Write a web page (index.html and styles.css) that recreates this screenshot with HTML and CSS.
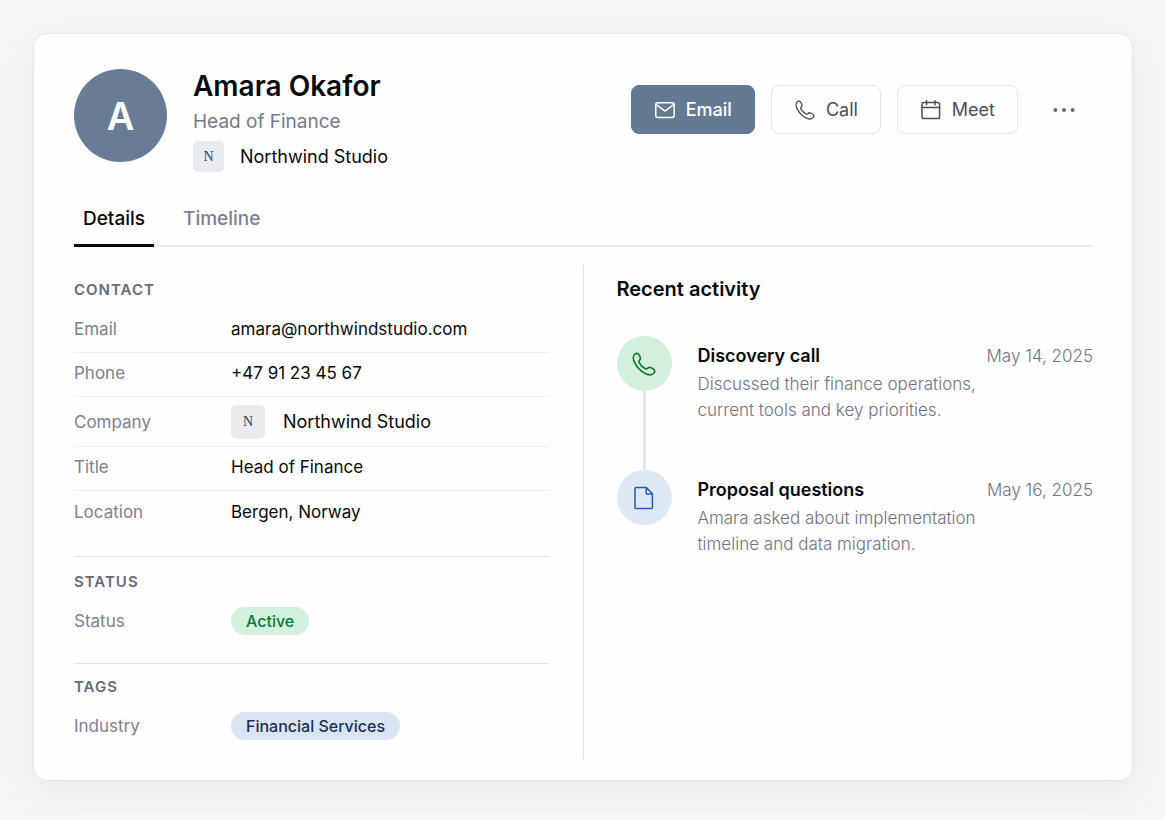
FILE: index.html
```html
<!DOCTYPE html>
<html lang="en">

<head>
  <meta charset="UTF-8">
  <meta name="viewport" content="width=device-width, initial-scale=1.0">
  <title>Amara Okafor</title>
  <link rel="stylesheet" href="styles.css">
</head>

<body>
  <main class="card">
    <!-- Person header -->
    <header class="header">
      <div class="avatar">A</div>
      <div class="person">
        <h1>Amara Okafor</h1>
        <p class="role">Head of Finance</p>
        <div class="company">
          <span class="logo">N</span>
          <span>Northwind Studio</span>
        </div>
      </div>
      <div class="actions">
        <button type="button" class="btn btn-primary">
          <svg class="icon" viewBox="0 0 20 20">
            <rect x=".8" y="2.8" width="18.4" height="14.6" rx="1.8" />
            <path d="M1.2 4.5 10 11.1l8.800-6.600" />
          </svg>
          Email
        </button>
        <button type="button" class="btn">
          <svg class="icon" viewBox="0 0 22 22">
            <path d="M3.200 1.600C4.600.9 6 1.500 6.600 2.800l.9 2c.4 1 .2 1.900-.5 2.600-.7.7-.8 1.500-.4 2.400C7.700 12 9.700 14 11.900 15.200c.9.500 1.700.4 2.400-.3.8-.9 1.800-1.100 2.800-.6l2.200 1.100c1.400.7 1.900 2.200 1.100 3.500C18.900 21 15.600 21.300 12.600 19.900 8 17.700 4 13.500 2 8.800.8 6 1 2.700 3.200 1.600z" />
          </svg>
          Call
        </button>
        <button type="button" class="btn">
          <svg class="icon" viewBox="0 0 20 20">
            <rect x="1" y="2.6" width="17.6" height="16" rx="1.8" />
            <path d="M1 7.400h17.600M5.600.8v4M14 .8v4" />
          </svg>
          Meet
        </button>
        <button type="button" class="more-btn" aria-label="More">
          <svg viewBox="0 0 22 6">
            <circle cx="2.4" cy="3" r="2.1" />
            <circle cx="11" cy="3" r="2.1" />
            <circle cx="19.6" cy="3" r="2.1" />
          </svg>
        </button>
      </div>
    </header>

    <nav class="tabs">
      <button type="button" class="tab active">Details</button>
      <button type="button" class="tab">Timeline</button>
    </nav>

    <div class="columns">
      <!-- Details Column -->
      <div class="details">
        <section>
          <h2>CONTACT</h2>
          <dl>
            <div class="row">
              <dt>Email</dt>
              <dd>amara@northwindstudio.com</dd>
            </div>
            <div class="row">
              <dt>Phone</dt>
              <dd>+47 91 23 45 67</dd>
            </div>
            <div class="row row-company">
              <dt>Company</dt>
              <dd class="company"><span class="logo logo-large">N</span>Northwind Studio</dd>
            </div>
            <div class="row">
              <dt>Title</dt>
              <dd>Head of Finance</dd>
            </div>
            <div class="row">
              <dt>Location</dt>
              <dd>Bergen, Norway</dd>
            </div>
          </dl>
        </section>
        <section>
          <h2>STATUS</h2>
          <dl>
            <div class="row row-pill">
              <dt>Status</dt>
              <dd><span class="pill pill-green">Active</span></dd>
            </div>
          </dl>
        </section>
        <section class="tags">
          <h2>TAGS</h2>
          <dl>
            <div class="row row-pill">
              <dt>Industry</dt>
              <dd><span class="pill pill-blue">Financial Services</span></dd>
            </div>
          </dl>
        </section>
      </div>

      <!-- Activity Column -->
      <div class="activity">
        <h2>Recent activity</h2>
        <ul>
          <li class="event">
            <div class="marker">
              <span class="dot dot-green">
                <svg class="icon icon-large" viewBox="0 0 22 22">
                  <path d="M3.200 1.600C4.600.9 6 1.500 6.600 2.800l.9 2c.4 1 .2 1.900-.5 2.600-.7.7-.8 1.500-.4 2.400C7.700 12 9.700 14 11.900 15.200c.9.500 1.700.4 2.400-.3.8-.9 1.800-1.100 2.800-.6l2.200 1.100c1.400.7 1.900 2.200 1.100 3.500C18.900 21 15.600 21.300 12.600 19.900 8 17.700 4 13.500 2 8.800.8 6 1 2.700 3.200 1.600z" />
                </svg>
              </span>
            </div>
            <div class="event-text">
              <h3>Discovery call</h3>
              <p>Discussed their finance operations, current tools and key priorities.</p>
            </div>
            <time datetime="2025-05-14">May 14, 2025</time>
          </li>
          <li class="event">
            <div class="marker">
              <span class="dot dot-blue">
                <svg class="icon icon-large" viewBox="0 0 24 24">
                  <path d="M3.700 1.600h10.700l6 6.200v13.900a.7.7 0 0 1-.7.700h-16a.7.7 0 0 1-.7-.7V2.300a.7.7 0 0 1 .7-.7zM14.200 1.800v5.600a.6.600 0 0 0 .6.600h5.400" />
                </svg>
              </span>
            </div>
            <div class="event-text">
              <h3>Proposal questions</h3>
              <p>Amara asked about implementation timeline and data migration.</p>
            </div>
            <time datetime="2025-05-16">May 16, 2025</time>
          </li>
        </ul>
      </div>
    </div>
  </main>
</body>

</html>
```
FILE: styles.css
```css
* {
  box-sizing: border-box;
}

body {
  font-family: Inter, sans-serif;
  font-size: 17px;
  line-height: 24px;
  background-color: #f7f7f7;
  color: #08090c;
  margin: 0;
  padding: 33px 32px 33px 33px;
}

h1,
h2,
h3,
p,
ul,
dl,
dd {
  margin: 0;
  padding: 0;
}

button {
  font-family: inherit;
  cursor: pointer;
}

.card {
  background-color: #fefefe;
  border: 1px solid #e5e7e9;
  border-radius: 14px;
  box-shadow: 0 12px 40px rgba(20, 25, 30, 0.07);
  padding: 35px 39px 21px 40px;
}

/* Header */
.header {
  display: flex;
  align-items: flex-start;
}

.avatar {
  display: flex;
  align-items: center;
  justify-content: center;
  width: 93px;
  height: 93px;
  margin-right: 26px;
  border-radius: 50%;
  background-color: #687d95;
  color: #fff;
  font-size: 38px;
  font-weight: 600;
}

.person h1 {
  font-size: 28px;
  font-weight: 600;
  line-height: 34px;
}

.role {
  margin: 7px 0;
  font-size: 19px;
  color: #74788b;
}

.company {
  display: flex;
  align-items: center;
  gap: 16px;
  font-size: 18px;
}

.logo {
  display: flex;
  align-items: center;
  justify-content: center;
  width: 31px;
  height: 31px;
  border-radius: 5px;
  background-color: #e8ebf0;
  color: #34435a;
  font-family: "Liberation Serif", serif;
  font-size: 14px;
}

.logo-large {
  width: 34px;
  height: 34px;
  margin-right: 2px;
}

.actions {
  display: flex;
  gap: 16px;
  margin-top: 16px;
  margin-left: auto;
}

.btn {
  display: flex;
  align-items: center;
  gap: 11px;
  height: 49px;
  padding: 0 22px 0 23px;
  border: 1px solid #e3e6e8;
  border-radius: 8px;
  background-color: #fefefe;
  color: #4b4d5f;
  font-size: 18px;
}

.btn-primary {
  border-color: #60758e;
  background-color: #647a93;
  color: #fff;
  font-weight: 500;
}

.icon {
  width: 20px;
  height: 20px;
  fill: none;
  stroke: currentColor;
  stroke-width: 1.5;
  stroke-linecap: round;
  stroke-linejoin: round;
}

.icon-large {
  width: 24px;
  height: 24px;
}

.more-btn {
  display: flex;
  align-items: center;
  justify-content: center;
  width: 59px;
  height: 49px;
  padding: 0;
  border: none;
  background: none;
  color: #6b6e7b;
}

.more-btn svg {
  width: 22px;
  height: 6px;
  fill: currentColor;
}

/* Tabs */
.tabs {
  display: flex;
  gap: 20px;
  margin-top: 25px;
  border-bottom: 2px solid #e9ebed;
}

.tab {
  margin-bottom: -2px;
  padding: 10px 9px 13px;
  border: none;
  border-bottom: 3px solid transparent;
  background: none;
  color: #7b7e8e;
  font-size: 19px;
  font-weight: 500;
  line-height: 24px;
}

.tab.active {
  border-bottom-color: #08090c;
  color: #08090c;
}

/* Columns */
.columns {
  display: grid;
  grid-template-columns: 1fr 1fr;
  margin-top: 18px;
}

.details {
  padding-right: 34px;
  border-right: 1px solid #e2e5e8;
}

.details section {
  padding: 15px 0 23px;
  border-bottom: 1px solid #e2e6e9;
}

.details .tags {
  padding: 13px 0 14px;
  border-bottom: none;
}

.details h2 {
  margin-bottom: 9px;
  color: #676a7a;
  font-size: 15px;
  font-weight: 600;
  letter-spacing: 1px;
  line-height: 20px;
}

.row {
  display: grid;
  grid-template-columns: 157px 1fr;
  align-items: center;
  min-height: 44px;
  padding-bottom: 3px;
  border-bottom: 1px solid #edf0f2;
}

.row:last-child {
  min-height: 42px;
  padding-bottom: 0;
  border-bottom: none;
}

.row-company {
  min-height: 50px;
  padding-bottom: 0;
}

.row-pill:last-child {
  min-height: 39px;
}

dt {
  color: #7d8090;
}

dd {
  display: flex;
  align-items: center;
}

.pill {
  padding: 2px 15px;
  border-radius: 14px;
  font-size: 16px;
  font-weight: 500;
}

.pill-green {
  background-color: #d3f1dd;
  color: #087a34;
}

.pill-blue {
  background-color: #dae4f2;
  color: #1b2f52;
}

.activity {
  padding-top: 12px;
  padding-left: 33px;
}

.activity h2 {
  margin-bottom: 35px;
  font-size: 20px;
  font-weight: 600;
  line-height: 24px;
}

.activity ul {
  list-style: none;
}

.event {
  display: flex;
  min-height: 134px;
}

.marker {
  display: flex;
  flex-direction: column;
  align-items: center;
  margin-right: 26px;
}

/* Line down to the next event */
.marker::after {
  content: "";
  flex: 1;
  width: 3px;
  background-color: #e4e5e9;
}

.event:last-child .marker::after {
  display: none;
}

.dot {
  display: flex;
  align-items: center;
  justify-content: center;
  width: 55px;
  height: 55px;
  border-radius: 50%;
}

.dot-green {
  background-color: #d3f0dc;
  color: #087a34;
}

.dot-blue {
  background-color: #dfe8f5;
  color: #2160a8;
}

.event-text {
  flex: 1;
  padding-top: 8px;
}

.event h3 {
  margin-bottom: 3px;
  font-size: 18px;
  font-weight: 600;
}

.event p {
  color: #6f7285;
  font-weight: 300;
  line-height: 26px;
}

.event time {
  padding-top: 8px;
  margin-left: 8px;
  color: #6f7285;
  font-weight: 300;
  white-space: nowrap;
}
```
